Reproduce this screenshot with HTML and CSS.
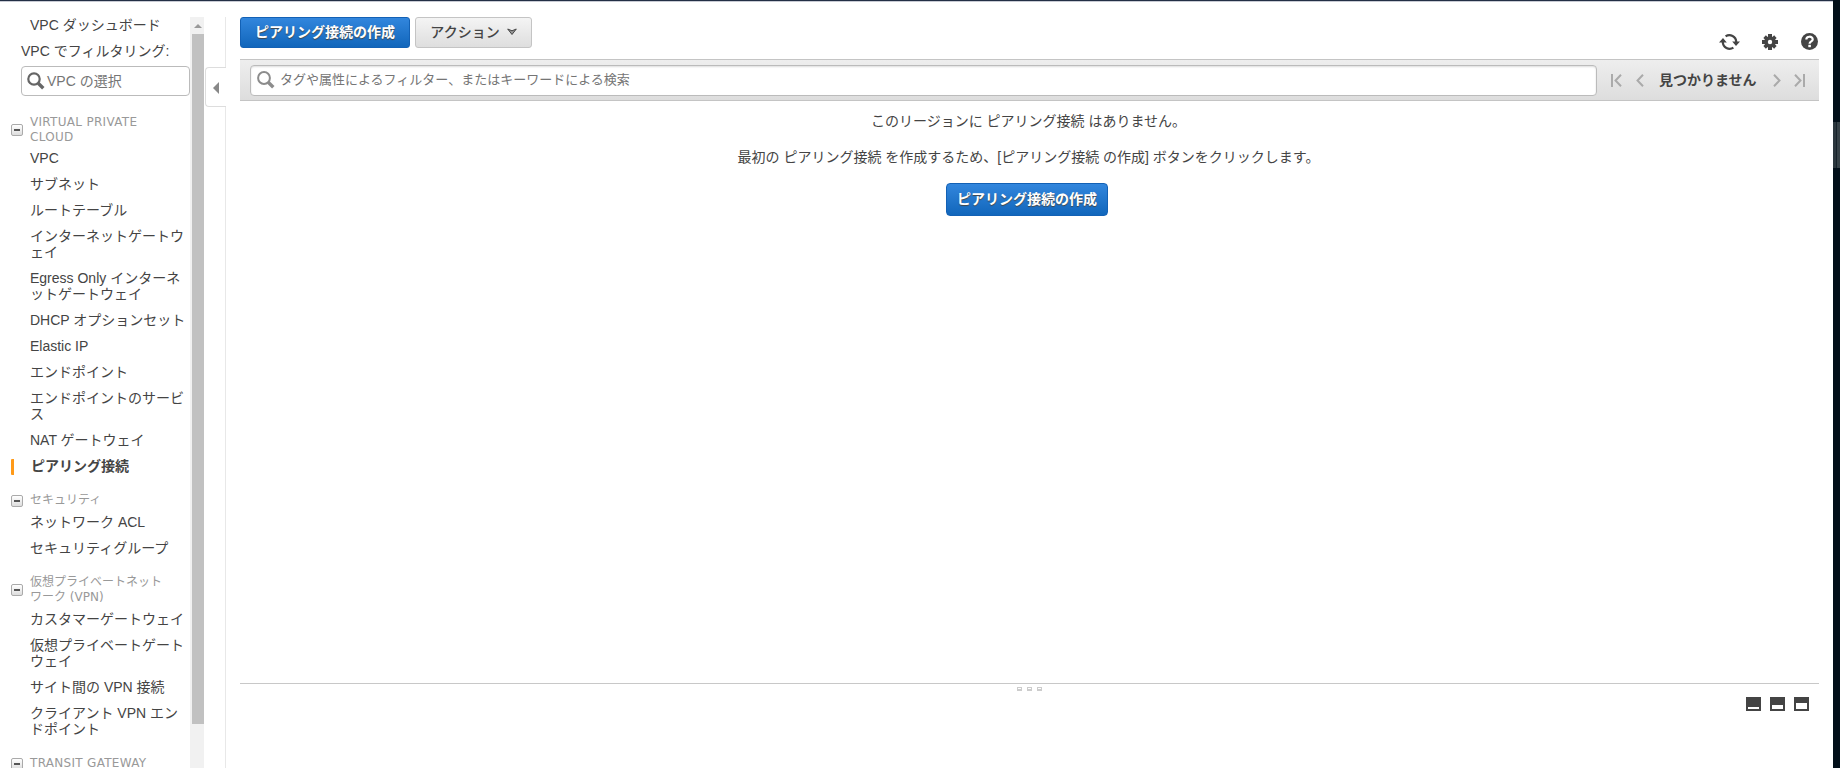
FILE: index.html
```html
<!DOCTYPE html>
<html lang="ja">
<head>
<meta charset="utf-8">
<title>VPC</title>
<link rel="stylesheet" href="styles.css">
</head>
<body>
<div class="app">
  <aside class="side">
    <nav class="nav">
      <a class="item dash">VPC ダッシュボード</a>
      <div class="filter-label">VPC でフィルタリング:</div>
      <div class="vpc-select">
        <svg width="18" height="18" viewBox="0 0 18 18"><circle cx="7" cy="7" r="5.7" fill="none" stroke="#666" stroke-width="2.2"/><path d="M11.2 11.2L16.3 16.2" stroke="#666" stroke-width="3.4"/></svg>
        <span>VPC の選択</span>
      </div>
      <div class="group first"><i class="box"></i><span class="latin">VIRTUAL PRIVATE<br>CLOUD</span></div>
      <a class="item">VPC</a>
      <a class="item">サブネット</a>
      <a class="item">ルートテーブル</a>
      <a class="item">インターネットゲートウ<br>ェイ</a>
      <a class="item">Egress Only インターネ<br>ットゲートウェイ</a>
      <a class="item">DHCP オプションセット</a>
      <a class="item">Elastic IP</a>
      <a class="item">エンドポイント</a>
      <a class="item">エンドポイントのサービ<br>ス</a>
      <a class="item">NAT ゲートウェイ</a>
      <a class="item active">ピアリング接続</a>
      <div class="group"><i class="box"></i>セキュリティ</div>
      <a class="item">ネットワーク ACL</a>
      <a class="item">セキュリティグループ</a>
      <div class="group"><i class="box"></i>仮想プライベートネット<br>ワーク (VPN)</div>
      <a class="item">カスタマーゲートウェイ</a>
      <a class="item">仮想プライベートゲート<br>ウェイ</a>
      <a class="item">サイト間の VPN 接続</a>
      <a class="item">クライアント VPN エン<br>ドポイント</a>
      <div class="group"><i class="box"></i><span class="latin">TRANSIT GATEWAY</span></div>
    </nav>
    <div class="scroll"><div class="up"></div><div class="thumb"></div></div>
    <div class="edge"><div class="handle"></div></div>
  </aside>
  <main class="main">
    <header class="actions">
      <button class="btn primary">ピアリング接続の作成</button>
      <button class="btn plain">アクション<svg width="10" height="8" viewBox="0 0 10 8"><path d="M.7 1L5 6.5L9.3 1L5 2.8Z" fill="#999" stroke="#444"/></svg></button>
      <div class="tools">
        <svg width="21" height="18" viewBox="0 0 21 18"><g fill="none" stroke="#444" stroke-width="2.2"><path d="M6.6 3.4A6.8 6.8 0 0 1 17.2 9"/><path d="M14.4 14.6A6.8 6.8 0 0 1 3.8 9"/></g><path d="M13.2 8.5H21L17 12.9ZM0 9.5H7.8L4 5.1Z" fill="#444"/></svg>
        <svg width="16" height="16" viewBox="0 0 16 16"><g fill="#444"><rect x="6" width="4" height="16"/><rect y="6" width="16" height="4"/><rect x="6.2" y=".4" width="3.6" height="15.2" transform="rotate(45 8 8)"/><rect y="6.2" x=".4" width="15.2" height="3.6" transform="rotate(45 8 8)"/><circle cx="8" cy="8" r="5.8"/></g><circle cx="8" cy="8" r="2.2" fill="#fff"/></svg>
        <svg width="17" height="17" viewBox="0 0 17 17"><circle cx="8.5" cy="8.5" r="8.5" fill="#444"/><path d="M5.3 6.6C5.3 2.8 11.7 2.8 11.7 6.4C11.7 8.6 8.6 8.2 8.6 10.8" fill="none" stroke="#fff" stroke-width="2.2"/><path d="M7.3 11.8h2.6v2.4H7.3z" fill="#fff"/></svg>
      </div>
    </header>
    <div class="bar">
      <div class="search">
        <svg width="18" height="18" viewBox="0 0 18 18"><circle cx="7" cy="7" r="5.9" fill="none" stroke="#8c8c8c" stroke-width="2"/><path d="M11.2 11.2L16.3 16.2" stroke="#8c8c8c" stroke-width="3.4"/></svg>
        <span>タグや属性によるフィルター、またはキーワードによる検索</span>
      </div>
      <div class="pager">
        <svg width="11" height="13" viewBox="0 0 11 13"><path d="M1 0V13M10 .7L4.5 6.5L10 12.3"/></svg>
        <svg class="prev" width="8" height="13" viewBox="0 0 8 13"><path d="M7 .7L1.5 6.5L7 12.3"/></svg>
        <b>見つかりません</b>
        <svg class="next" width="8" height="13" viewBox="0 0 8 13"><path d="M1 .7L6.5 6.5L1 12.3"/></svg>
        <svg width="11" height="13" viewBox="0 0 11 13"><path d="M10 0V13M1 .7L6.5 6.5L1 12.3"/></svg>
      </div>
    </div>
    <section class="empty">
      <p>このリージョンに ピアリング接続 はありません。</p>
      <p>最初の ピアリング接続 を作成するため、[ピアリング接続 の作成] ボタンをクリックします。</p>
      <button class="btn primary small">ピアリング接続の作成</button>
    </section>
    <footer class="split">
      <div class="grip"><i></i><i></i><i></i></div>
      <div class="layouts"><i class="low"></i><i class="mid"></i><i class="high"></i></div>
    </footer>
  </main>
  <div class="strip"><div class="strip-thumb"></div></div>
</div>
</body>
</html>
```
FILE: styles.css
```css
* { box-sizing: border-box; }
body {
  margin: 0;
  background: #fff;
  color: #444;
  font: 14px/16px "Liberation Sans", "Noto Sans CJK JP", sans-serif;
}
svg { display: block; flex: none; }
.app { display: flex; height: 768px; overflow: hidden; }
.side { display: flex; width: 226px; border-top: 1px solid #232f45; box-shadow: inset 0 1px #c8cbd4; padding-top: 16px; }
.nav { width: 190px; white-space: nowrap; overflow: hidden; }
.item { display: block; padding: 4px 0 6px 30px; color: #444; }
.dash { padding: 0 0 0 30px; }
.filter-label { padding: 10px 0 0 21px; }
.vpc-select {
  display: flex; align-items: center; gap: 2px;
  width: 169px; height: 30px; margin: 7px 0 0 21px; padding-left: 5px;
  border: 1px solid #bbb; border-radius: 4px; color: #757575;
}
.group {
  position: relative;
  margin: 13px 0 2px; padding-left: 30px;
  color: #999; font: 12px/15px "DejaVu Sans", "Noto Sans CJK JP", sans-serif;
}
.latin { letter-spacing: .3px; }
.group.first { margin-top: 19px; margin-bottom: 1px; }
.box {
  position: absolute; left: 11px; top: 50%; width: 12px; height: 12px; margin-top: -6px;
  border: 1px solid #aaa; border-radius: 2px; background: linear-gradient(#fff, #ddd);
}
.box::after { content: ""; display: block; width: 6px; height: 2px; margin: 4px 2px; background: #555; }
.active { position: relative; padding-left: 31px; font-weight: bold; }
.active::before { content: ""; position: absolute; left: 11px; top: 5px; width: 3px; height: 16px; border-radius: 1px 0 0 1px; background: #ff9a18; }
.scroll { width: 14px; background: #f1f1f1; display: flex; flex-direction: column; align-items: flex-end; }
.up { width: 0; height: 0; margin: 7px 2px 6px 0; border: 4px solid transparent; border-top: 0; border-bottom-color: #999; }
.thumb { width: 12px; height: 690px; background: #c1c1c1; }
.edge { width: 22px; padding-top: 50px; border-right: 1px solid #e8e8e8; }
.handle { width: 21px; height: 40px; margin-left: 1px; border: 1px solid #ddd; border-right: 0; border-radius: 4px 0 0 4px; background: #fff; padding: 14px 0 0 7px; }
.handle::after { content: ""; display: block; width: 0; height: 0; border: 6px solid transparent; border-left: 0; border-right-color: #888; }
.main { display: flex; flex-direction: column; flex: 1; border-top: 1px solid #232f45; box-shadow: inset 0 1px #c8cbd4; padding: 16px 14px 0; }
.actions { display: flex; height: 42px; gap: 5px; align-items: flex-start; }
.btn { display: flex; align-items: center; justify-content: center; height: 31px; padding: 0 0 2px; border-radius: 3px; font: 14px/16px "Liberation Sans", "Noto Sans CJK JP", sans-serif; white-space: nowrap; }
.primary { width: 170px; color: #fff; font-weight: bold; border: 1px solid #1361b5; background: linear-gradient(#3286dd, #1166bb); text-shadow: 0 1px 1px #444; }
.plain { width: 117px; gap: 7px; color: #444; font-weight: 500; border: 1px solid #c4c4c4; background: linear-gradient(#f4f4f4, #dedede); }
.tools { display: flex; align-items: center; margin: 15px 1px 0 auto; }
.tools svg:nth-child(1) { margin-top: 1px; }
.tools svg:nth-child(2) { margin: 0 23px 0 22px; }
.bar { display: flex; align-items: center; width: 1579px; height: 42px; padding-left: 10px; border: solid #c4c4c4; border-width: 1px 0; background: linear-gradient(#eee, #ddd); }
.search { display: flex; flex: none; align-items: center; gap: 5px; width: 1347px; height: 31px; padding: 0 0 1px 6px; border: 1px solid #bbb; border-radius: 4px; background: #fff; color: #757575; font-size: 13px; box-shadow: inset 0 1px 2px #ddd; }
.pager { display: flex; align-items: center; margin-left: 14px; white-space: nowrap; }
.pager path { fill: none; stroke: #aaa; stroke-width: 2; }
.prev { margin: 0 15px 0 14px; }
.next { margin: 0 13px 0 16px; }
.empty { display: flex; flex-direction: column; align-items: center; flex: 1; width: 1574px; padding-top: 12px; white-space: nowrap; }
.empty p { margin: 0 0 20px; padding-left: 3px; }
.small { width: 162px; height: 33px; margin-top: -2px; border-radius: 4px; }
.split { width: 1579px; height: 85px; border-top: 1px solid #c8c8c8; }
.grip { display: flex; justify-content: center; gap: 5px; padding-top: 3px; }
.grip i { width: 5px; height: 4px; border: 1px solid #ccc; border-bottom-width: 2px; }
.layouts { display: flex; justify-content: flex-end; gap: 9px; padding: 6px 10px 0 0; }
.layouts i { width: 15px; height: 14px; border: 2px solid #444; }
.layouts .low { border-top-width: 10px; }
.layouts .mid { border-top-width: 8px; }
.layouts .high { border-top-width: 6px; }
.strip { width: 7px; background: #020f19; padding-top: 122px; }
.strip-thumb { height: 46px; background: linear-gradient(90deg, #2b363d 3px, #16222a 3px, #16222a 4px, #364147 4px); }
```
